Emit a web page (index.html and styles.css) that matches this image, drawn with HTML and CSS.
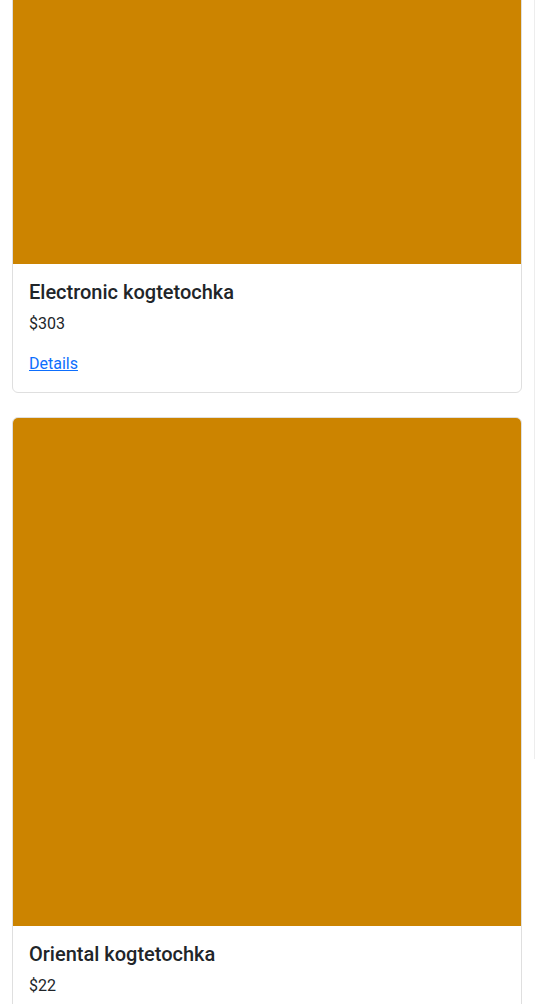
FILE: index.html
```html
<!DOCTYPE html>
<html lang="en">
<head>
<meta charset="utf-8">
<title>Products</title>
<link rel="stylesheet" href="styles.css">
</head>
<body>
<div class="page">
  <div class="list">
    <div class="card">
      <div class="card-img"></div>
      <div class="card-body">
        <h5 class="card-title">Electronic kogtetochka</h5>
        <p class="card-text">$303</p>
        <a class="card-link" href="#">Details</a>
      </div>
    </div>
    <div class="card">
      <div class="card-img"></div>
      <div class="card-body">
        <h5 class="card-title">Oriental kogtetochka</h5>
        <p class="card-text">$22</p>
        <a class="card-link" href="#">Details</a>
      </div>
    </div>
  </div>
</div>
</body>
</html>
```
FILE: styles.css
```css
html, body {
  margin: 0;
  padding: 0;
  background: #fff;
}
body {
  font-family: Roboto, "Noto Sans", sans-serif;
  font-size: 16px;
  line-height: 1.5;
  color: #212529;
  height: 1004px;
  overflow: hidden;
}
.page {
  width: 535px;
  height: 1004px;
  border-right: 1px solid #ededed;
  padding: 0 12px;
  box-sizing: border-box;
}
.list {
  margin-top: -245px;
  display: flex;
  flex-direction: column;
  gap: 24px;
  width: 510px;
}
.card {
  border: 1px solid #dfdfdf;
  border-radius: 6px;
  overflow: hidden;
  background: #fff;
}
.card-img {
  height: 508px;
  background: #cc8400;
}
.card-body {
  padding: 16px;
}
.card-title {
  margin: 0 0 8px;
  font-size: 20px;
  font-weight: 500;
  line-height: 1.2;
}
.card-text {
  margin: 0 0 16px;
}
.card-link {
  color: #0d6efd;
  text-decoration: underline;
}
```
